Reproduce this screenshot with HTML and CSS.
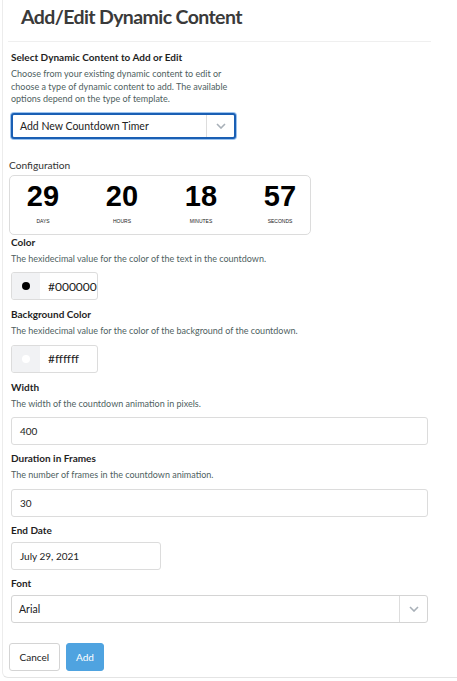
FILE: index.html
```html
<!DOCTYPE html>
<html>
<head>
<meta charset="utf-8">
<link rel="stylesheet" href="styles.css">
</head>
<body>
<div class="panel">
  <div class="header"><h1 class="title">Add/Edit Dynamic Content</h1></div>
  <div class="form">
    <div class="label">Select Dynamic Content to Add or Edit</div>
    <div class="desc narrow">Choose from your existing dynamic content to edit or choose a type of dynamic content to add. The available options depend on the type of template.</div>
    <div class="select focus">
      <span class="select-text">Add New Countdown Timer</span>
      <span class="select-btn"><svg width="10" height="6" viewBox="0 0 10 6"><path d="M1 1l4 4 4-4" fill="none" stroke="#a8b0b8" stroke-width="1.6"/></svg></span>
    </div>
    <div class="config-label">Configuration</div>
    <div class="countdown">
      <div class="cd-col"><div class="cd-num">29</div><div class="cd-unit">DAYS</div></div>
      <div class="cd-col"><div class="cd-num">20</div><div class="cd-unit">HOURS</div></div>
      <div class="cd-col"><div class="cd-num">18</div><div class="cd-unit">MINUTES</div></div>
      <div class="cd-col"><div class="cd-num">57</div><div class="cd-unit">SECONDS</div></div>
    </div>
    <div class="label">Color</div>
    <div class="desc">The hexidecimal value for the color of the text in the countdown.</div>
    <div class="color-input">
      <span class="swatch"><span class="dot black"></span></span>
      <span class="color-text">#000000</span>
    </div>
    <div class="label">Background Color</div>
    <div class="desc">The hexidecimal value for the color of the background of the countdown.</div>
    <div class="color-input">
      <span class="swatch"><span class="dot white"></span></span>
      <span class="color-text">#ffffff</span>
    </div>
    <div class="label">Width</div>
    <div class="desc">The width of the countdown animation in pixels.</div>
    <div class="input wide">400</div>
    <div class="label">Duration in Frames</div>
    <div class="desc">The number of frames in the countdown animation.</div>
    <div class="input wide">30</div>
    <div class="label tight">End Date</div>
    <div class="input date">July 29, 2021</div>
    <div class="label tight">Font</div>
    <div class="select wide-select">
      <span class="select-text">Arial</span>
      <span class="select-btn"><svg width="10" height="6" viewBox="0 0 10 6"><path d="M1 1l4 4 4-4" fill="none" stroke="#a8b0b8" stroke-width="1.6"/></svg></span>
    </div>
    <div class="buttons">
      <button class="btn cancel">Cancel</button>
      <button class="btn add">Add</button>
    </div>
  </div>
</div>
</body>
</html>
```
FILE: styles.css
```css
* { box-sizing: border-box; }
body {
  margin: 0;
  background: #fff;
  font-family: Lato, "Open Sans", sans-serif;
  color: #2b2b2b;
}
.panel {
  margin-left: 2px;
  height: 678px;
  border-left: 1px solid #ececec;
  border-bottom: 1px solid #e4e4e4;
  border-bottom-left-radius: 6px;
}
.header {
  margin: 0 26px 0 5px;
  height: 42px;
  border-bottom: 1px solid #efefef;
  padding: 5px 0 0 13px;
}
.title {
  margin: 0;
  font-size: 19.5px;
  font-weight: 700;
  letter-spacing: -0.6px;
  color: #3a3a3a;
  line-height: 24px;
}
.form {
  padding: 8px 0 0 8px;
}
.label {
  font-size: 10px;
  font-weight: 700;
  color: #1f1f1f;
  line-height: 14px;
  margin-bottom: 4px;
}
.label.tight { margin-bottom: 5px; }
.desc {
  font-size: 9px;
  color: #4f5f5f;
  line-height: 12.5px;
  margin-bottom: 7px;
}
.desc.narrow { width: 228px; }
.select {
  display: flex;
  height: 26px;
  border: 1px solid #d4d4d4;
  border-radius: 3px;
  background: #fff;
  font-size: 10.5px;
  color: #222;
}
.select.focus {
  width: 225px;
  border: 2px solid #1a5fb4;
  box-shadow: 0 0 0 1px #9cc3ee;
}
.select-text {
  flex: 1;
  display: flex;
  align-items: center;
  padding-left: 7px;
}
.select-btn {
  width: 28px;
  border-left: 1px solid #ddd;
  display: flex;
  align-items: center;
  justify-content: center;
}
.config-label {
  margin: 19px 0 3px -2px;
  font-size: 10.2px;
  color: #333;
  line-height: 14px;
}
.countdown {
  margin-left: -2px;
  width: 302px;
  height: 60px;
  border: 1px solid #dcdcdc;
  border-radius: 5px;
  display: grid;
  grid-template-columns: repeat(4, 66px);
  column-gap: 13px;
  padding-top: 4px;
}
.cd-col { text-align: center; font-family: "Liberation Sans", Arial, sans-serif; color: #000; }
.cd-num { font-size: 29px; font-weight: 700; line-height: 32px; }
.cd-unit { font-size: 5px; line-height: 8px; margin-top: 5px; color: #222; }
.color-input {
  display: flex;
  width: 87px;
  height: 28px;
  border: 1px solid #dcdcdc;
  border-radius: 3px;
  margin-bottom: 7px;
  font-size: 12px;
  overflow: hidden;
}
.swatch {
  flex: 0 0 28px;
  background: #f1f2f4;
  display: flex;
  align-items: center;
  justify-content: center;
}
.dot { width: 8px; height: 8px; border-radius: 50%; }
.dot.black { background: #000; }
.dot.white { background: #fff; }
.color-text {
  flex: 1;
  min-width: 0;
  display: flex;
  align-items: center;
  padding-left: 8px;
  color: #222;
  white-space: nowrap;
  overflow: hidden;
}
.input {
  height: 28px;
  border: 1px solid #dcdcdc;
  border-radius: 3px;
  display: flex;
  align-items: center;
  padding-left: 8px;
  font-size: 10px;
  color: #222;
  margin-bottom: 6px;
}
.input.wide { width: 417px; }
.input.date { width: 150px; }
.wide-select { width: 417px; height: 28px; }
.buttons {
  display: flex;
  gap: 6px;
  margin: 20px 0 0 -2px;
}
.btn {
  height: 28px;
  border-radius: 3px;
  font-family: Lato, "Open Sans", sans-serif;
  font-size: 10px;
  padding: 0 9.5px;
}
.cancel { background: #fff; border: 1px solid #d4d4d4; color: #222; }
.add { background: #4fa3e0; border: 1px solid #4fa3e0; color: #fff; }
```
